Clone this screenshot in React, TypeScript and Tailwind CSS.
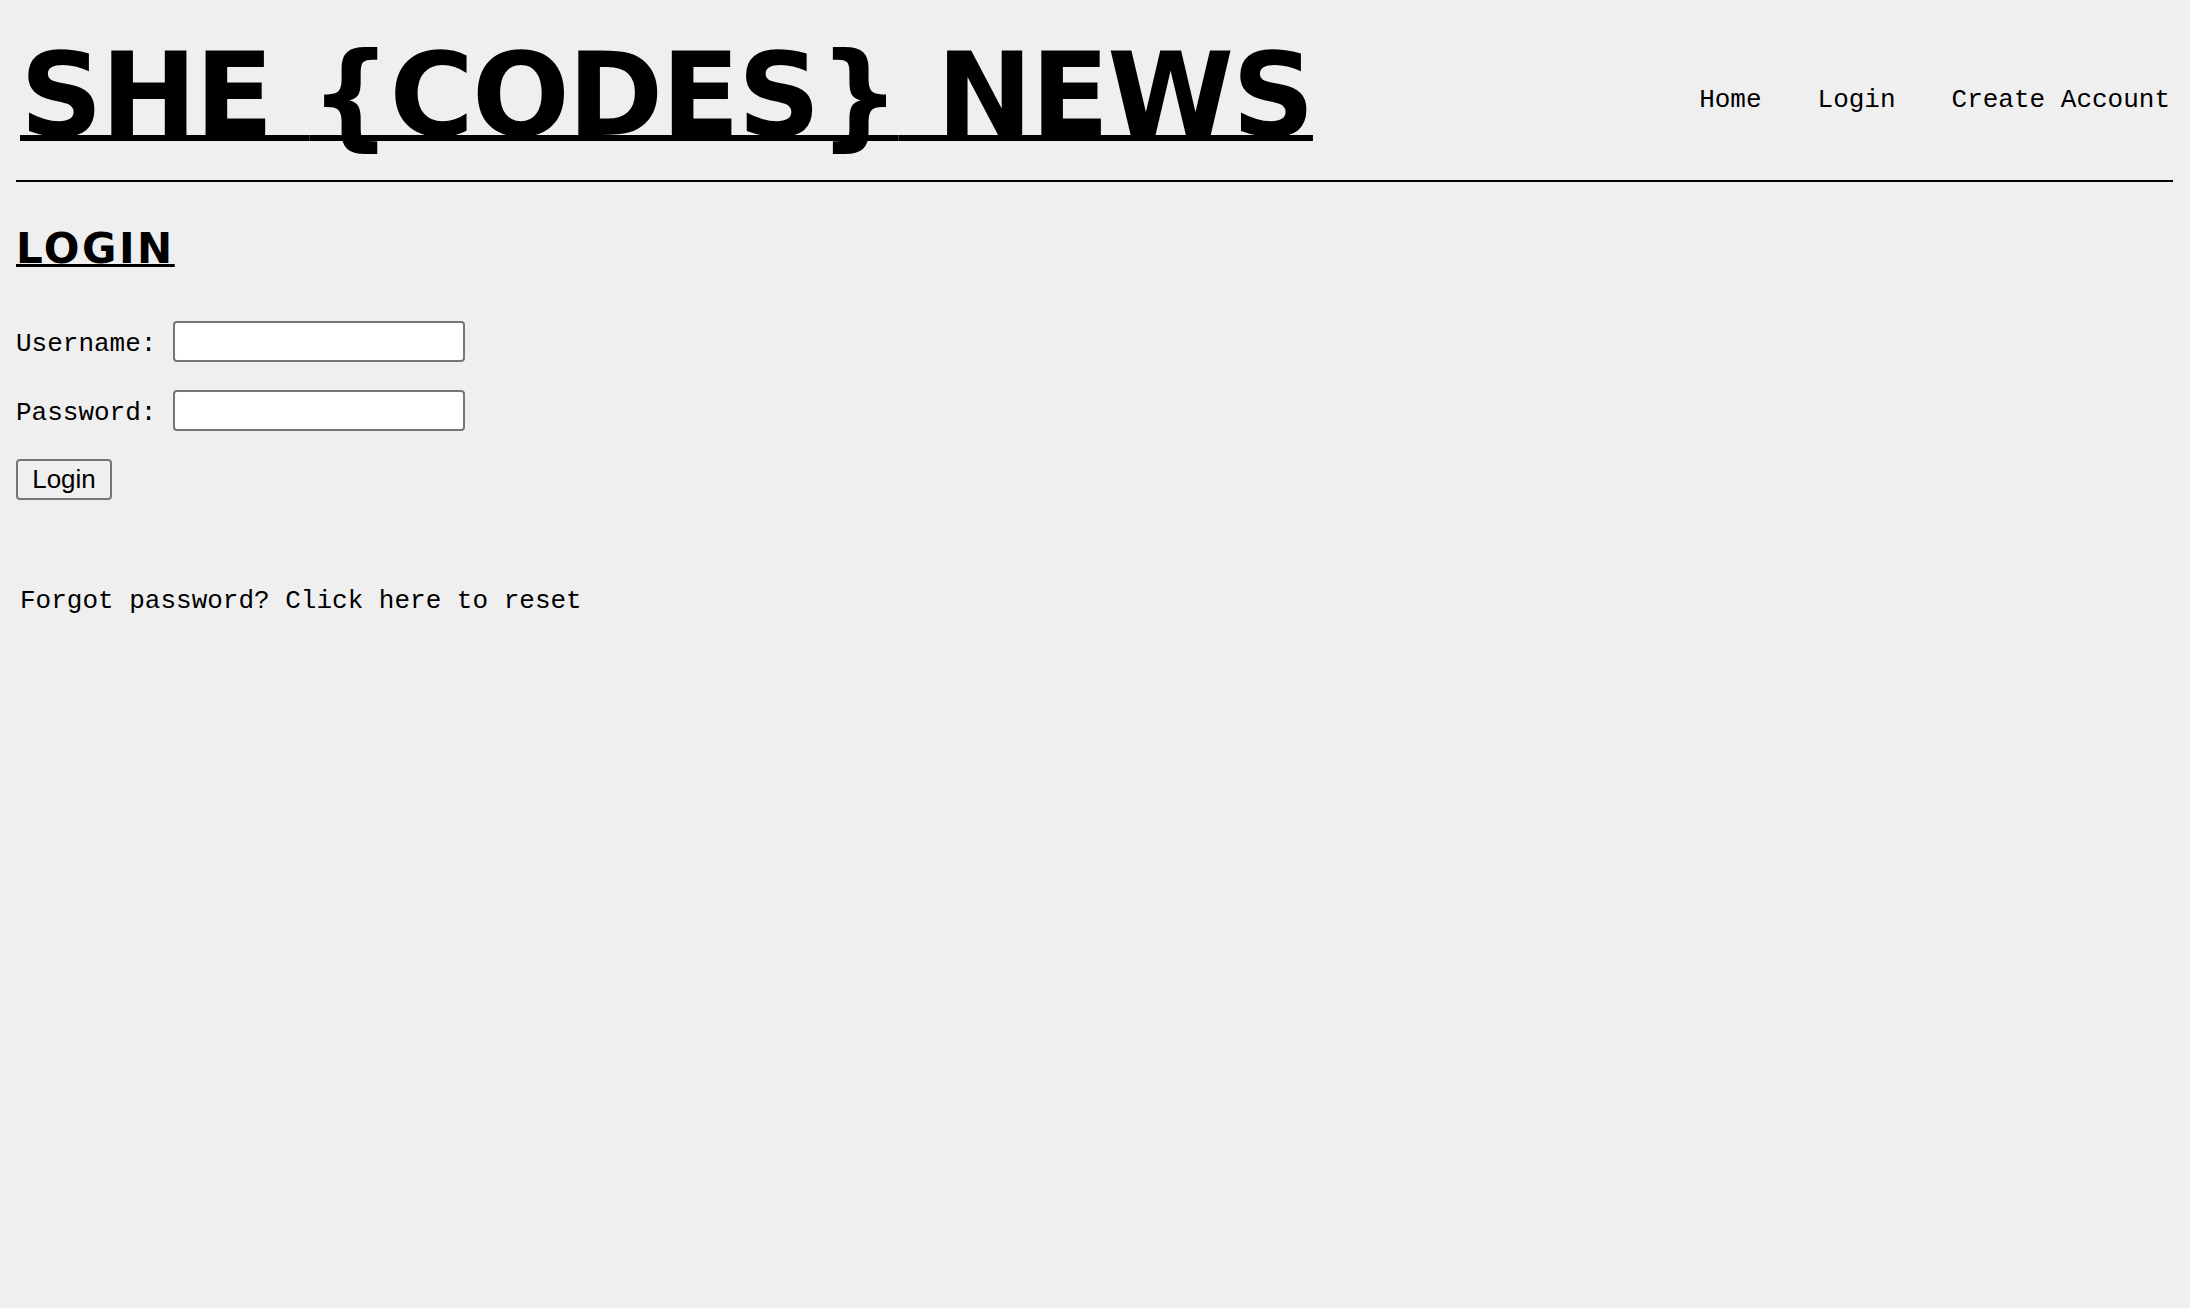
import { useState } from "react";

const mono = "font-['Liberation_Mono','Courier_New',monospace]";
const display = "font-['DejaVu_Sans','Open_Sans',sans-serif]";

function NavBar() {
  const links = ["Home", "Login", "Create Account"];
  return (
    <header className="flex items-start justify-between pt-[38px]">
      <a
        href="#"
        className={`${display} ml-1 text-[115px] leading-[115px] font-bold tracking-[-2px] text-black underline decoration-[6px] underline-offset-[0px] [text-decoration-skip-ink:none] whitespace-nowrap`}
      >
        SHE {"{CODES}"} NEWS
      </a>
      <nav className={`${mono} mt-[49px] mr-[3px] flex gap-[56px] text-[26px] leading-[26px] text-black`}>
        {links.map((l) => (
          <a key={l} href="#" className="whitespace-pre">
            {l}
          </a>
        ))}
      </nav>
    </header>
  );
}

function App() {
  const [username, setUsername] = useState("");
  const [password, setPassword] = useState("");

  return (
    <div className="min-h-screen bg-[#efefef] pl-4 pr-[17px] text-black">
      <NavBar />
      <hr className="mt-[27px] border-0 border-t-2 border-black" />

      <h2
        className={`${display} mt-[46px] text-[42px] leading-[42px] font-bold tracking-[2.5px] underline decoration-[3px] underline-offset-[1px] [text-decoration-skip-ink:none]`}
      >
        LOGIN
      </h2>

      <form className={`${mono} mt-[51px] flex flex-col gap-[28px] text-[26px] leading-[26px]`}>
        <div className="flex items-start gap-[17px]">
          <label className="pt-[10px]">Username:</label>
          <input
            value={username}
            onChange={(e) => setUsername(e.target.value)}
            className="h-[41px] w-[292px] rounded-[4px] border-2 border-[#767676] bg-white px-2"
          />
        </div>
        <div className="flex items-start gap-[17px]">
          <label className="pt-[10px]">Password:</label>
          <input
            type="password"
            value={password}
            onChange={(e) => setPassword(e.target.value)}
            className="h-[41px] w-[292px] rounded-[4px] border-2 border-[#767676] bg-white px-2"
          />
        </div>
        <div>
          <button
            type="button"
            className="flex h-[41px] w-[96px] items-center justify-center rounded-[4px] border-2 border-[#767676] bg-[#efefef] font-['Liberation_Sans',Arial,sans-serif] text-[26px] leading-[29px]"
          >
            Login
          </button>
        </div>
      </form>

      <p className={`${mono} mt-[88px] ml-1 text-[26px] leading-[26px]`}>
        <a href="#">Forgot password? Click here to reset</a>
      </p>
    </div>
  );
}

export default App;
